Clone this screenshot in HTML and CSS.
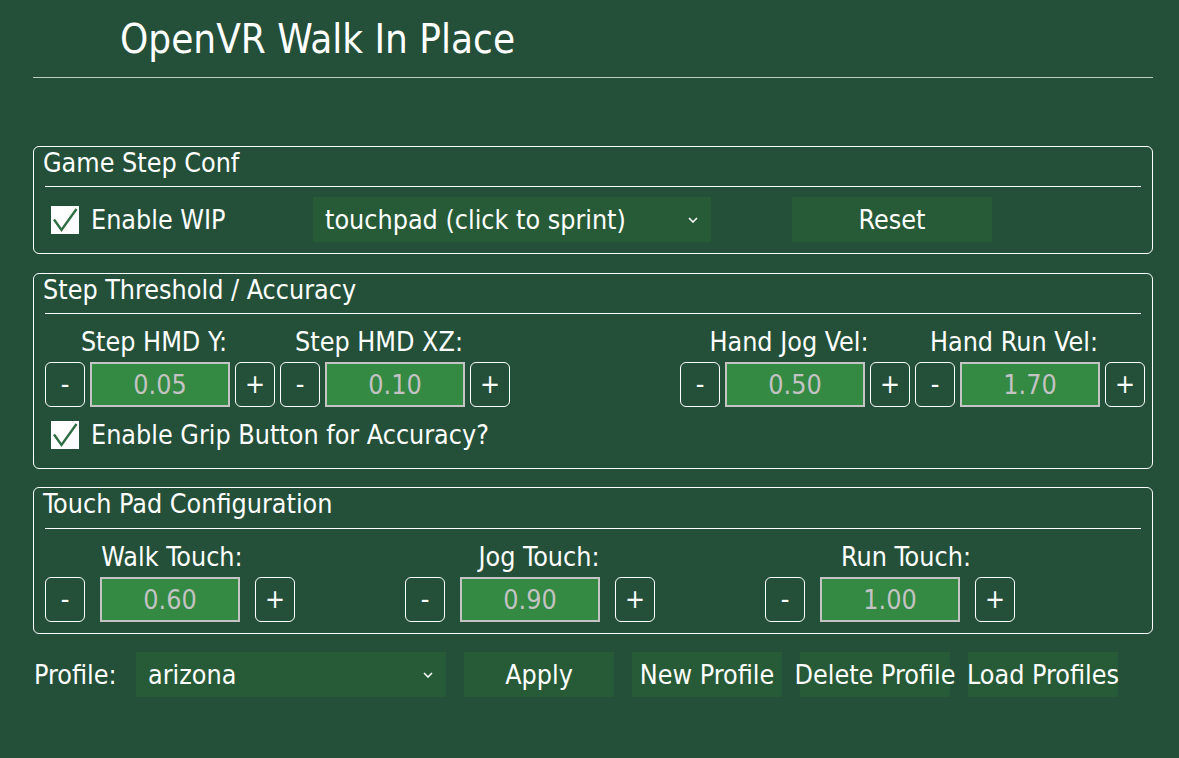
FILE: index.html
```html
<!DOCTYPE html>
<html>
<head>
<meta charset="utf-8">
<title>OpenVR Walk In Place</title>
<link rel="stylesheet" href="styles.css">
</head>
<body>
<div class="app">
  <header class="header">
    <h1 class="title">OpenVR Walk In Place</h1>
  </header>

  <section class="group g1">
    <div class="group-title">Game Step Conf</div>
    <div class="rule"></div>
    <div class="row1">
      <div class="check check-wip">
        <svg class="box" viewBox="0 0 28 28" width="28" height="28"><rect width="28" height="28" fill="#ffffff"/><path d="M3 13.5 L10.5 24 L25.5 3" fill="none" stroke="#2f6e44" stroke-width="2.4"/></svg>
        <span>Enable WIP</span>
      </div>
      <div class="select sel-mode">
        <span>touchpad (click to sprint)</span>
        <svg class="chev" viewBox="0 0 10 6" width="10" height="6"><path d="M1 1 L5 5 L9 1" fill="none" stroke="#ffffff" stroke-width="1.6"/></svg>
      </div>
      <button class="flat reset">Reset</button>
    </div>
  </section>

  <section class="group g2">
    <div class="group-title">Step Threshold / Accuracy</div>
    <div class="rule"></div>
    <div class="thresh">
      <div class="pair">
        <div class="col">
          <div class="lbl lbl-a">Step HMD Y:</div>
          <div class="spin">
            <button class="pm">-</button><div class="field">0.05</div><button class="pm">+</button>
          </div>
        </div>
        <div class="col">
          <div class="lbl lbl-b">Step HMD XZ:</div>
          <div class="spin">
            <button class="pm">-</button><div class="field">0.10</div><button class="pm">+</button>
          </div>
        </div>
      </div>
      <div class="pair">
        <div class="col">
          <div class="lbl lbl-a">Hand Jog Vel:</div>
          <div class="spin">
            <button class="pm">-</button><div class="field">0.50</div><button class="pm">+</button>
          </div>
        </div>
        <div class="col">
          <div class="lbl lbl-b">Hand Run Vel:</div>
          <div class="spin">
            <button class="pm">-</button><div class="field">1.70</div><button class="pm">+</button>
          </div>
        </div>
      </div>
    </div>
    <div class="check check-grip">
      <svg class="box" viewBox="0 0 28 28" width="28" height="28"><rect width="28" height="28" fill="#ffffff"/><path d="M3 13.5 L10.5 24 L25.5 3" fill="none" stroke="#2f6e44" stroke-width="2.4"/></svg>
      <span>Enable Grip Button for Accuracy?</span>
    </div>
  </section>

  <section class="group g3">
    <div class="group-title">Touch Pad Configuration</div>
    <div class="rule"></div>
    <div class="touch">
      <div class="col tcol">
        <div class="lbl lbl-t1">Walk Touch:</div>
        <div class="spin spin-wide">
          <button class="pm">-</button><div class="field">0.60</div><button class="pm">+</button>
        </div>
      </div>
      <div class="col tcol">
        <div class="lbl lbl-t2">Jog Touch:</div>
        <div class="spin spin-wide">
          <button class="pm">-</button><div class="field">0.90</div><button class="pm">+</button>
        </div>
      </div>
      <div class="col tcol">
        <div class="lbl lbl-t3">Run Touch:</div>
        <div class="spin spin-wide">
          <button class="pm">-</button><div class="field">1.00</div><button class="pm">+</button>
        </div>
      </div>
    </div>
  </section>

  <div class="profile">
    <span class="profile-lbl">Profile:</span>
    <div class="select sel-profile">
      <span>arizona</span>
      <svg class="chev" viewBox="0 0 10 6" width="10" height="6"><path d="M1 1 L5 5 L9 1" fill="none" stroke="#ffffff" stroke-width="1.6"/></svg>
    </div>
    <button class="flat pbtn">Apply</button>
    <button class="flat pbtn">New Profile</button>
    <button class="flat pbtn">Delete Profile</button>
    <button class="flat pbtn">Load Profiles</button>
  </div>
</div>
</body>
</html>
```

FILE: styles.css
```css
html, body {
  margin: 0;
  height: 100%;
}

body {
  background: #24503a;
  color: #ffffff;
  font-family: "DejaVu Sans Condensed", "DejaVu Sans", sans-serif;
  font-stretch: semi-condensed;
  font-size: 26.67px;
  overflow: hidden;
}

button {
  font: inherit;
  color: inherit;
  margin: 0;
}

.app {
  padding: 0 26px 0 33px;
}

.header {
  height: 77px;
  border-bottom: 1px solid #b8ccbf;
}

.title {
  margin: 0 0 0 87px;
  padding-top: 15px;
  font-size: 40px;
  line-height: 48px;
  font-weight: normal;
}

.group {
  border: 1px solid #ffffff;
  border-radius: 6px;
  padding: 0 11px 11px 11px;
}

.g1 { margin-top: 68px; }
.g2 { margin-top: 19px; padding-bottom: 17px; }
.g3 { margin-top: 18px; }

.group-title {
  height: 32px;
  line-height: 32px;
  margin-left: -2px;
  white-space: nowrap;
}

.rule {
  height: 1px;
  background: #ffffff;
  margin-top: 7px;
}

.g3 .rule { margin-top: 8px; }

/* row 1 */
.row1 {
  display: flex;
  align-items: center;
  height: 45px;
  margin-top: 10px;
}

.check {
  display: flex;
  align-items: center;
  gap: 12px;
  padding-left: 6px;
  line-height: 32px;
  white-space: nowrap;
}

.check .box {
  flex: none;
  display: block;
}

.check-wip {
  width: 262px;
}

.check-grip {
  margin-top: 12px;
  height: 32px;
}

.select {
  display: flex;
  align-items: center;
  justify-content: space-between;
  box-sizing: border-box;
  height: 45px;
  padding: 0 13px 0 12px;
  background: #275a37;
  white-space: nowrap;
}

.chev {
  display: block;
  flex: none;
}

.sel-mode {
  width: 398px;
  margin-right: 81px;
}

.flat {
  height: 45px;
  border: none;
  background: #275a37;
  padding: 0;
  white-space: nowrap;
  display: flex;
  align-items: center;
  justify-content: center;
  overflow: visible;
}

.reset {
  width: 200px;
}

/* spin boxes */
.thresh {
  display: flex;
  justify-content: space-between;
  margin-top: 12px;
  margin-right: -4px;
}

.pair {
  display: flex;
  gap: 5px;
}

.col {
  display: flex;
  flex-direction: column;
  gap: 4px;
}

.tcol {
  width: 250px;
}

.lbl {
  height: 32px;
  line-height: 32px;
  text-align: center;
  white-space: nowrap;
}

.lbl-a { padding-right: 12px; }
.lbl-b { padding-right: 32px; }
.lbl-t1 { padding-left: 4px; }
.lbl-t2 { padding-left: 18px; }
.lbl-t3 { padding-left: 32px; }

.spin {
  display: flex;
  gap: 5px;
  height: 45px;
}

.spin-wide {
  gap: 15px;
}

.pm {
  width: 40px;
  height: 45px;
  box-sizing: border-box;
  border: 1px solid #ffffff;
  border-radius: 6px;
  background: transparent;
  padding: 0;
  display: flex;
  align-items: center;
  justify-content: center;
  line-height: 1;
}

.field {
  width: 140px;
  height: 45px;
  box-sizing: border-box;
  border: 2px solid #c4c4c4;
  background: #348a42;
  color: #c3c3c3;
  text-align: center;
  line-height: 41px;
}

.touch {
  display: grid;
  grid-template-columns: 360px 360px 360px;
  margin-top: 12px;
}

/* profile row */
.profile {
  display: flex;
  align-items: center;
  height: 45px;
  margin-top: 18px;
  gap: 18px;
}

.profile-lbl {
  width: 84px;
  padding-left: 1px;
  white-space: nowrap;
}

.sel-profile {
  width: 310px;
}

.pbtn {
  width: 150px;
}
```
